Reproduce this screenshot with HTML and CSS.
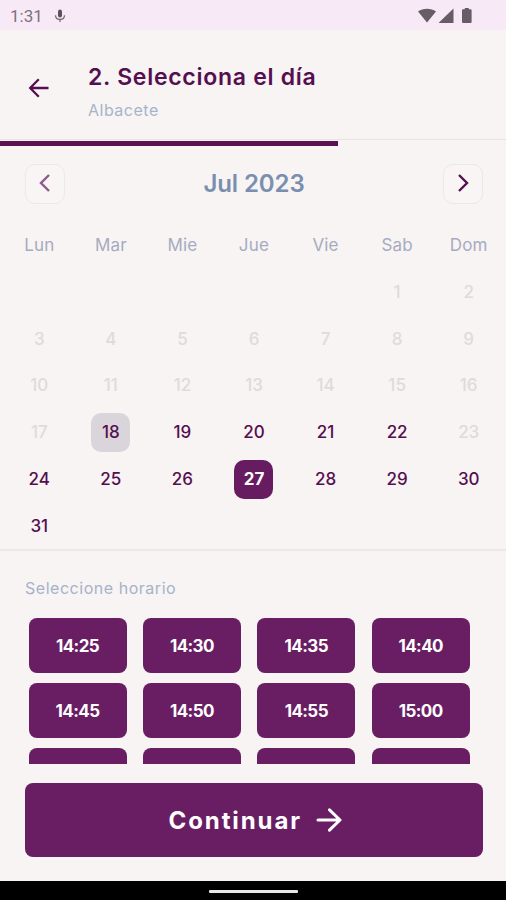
FILE: index.html
```html
<!DOCTYPE html>
<html lang="es">
<head>
<meta charset="utf-8">
<meta name="viewport" content="width=device-width, initial-scale=1">
<title>Selecciona el día</title>
<link rel="stylesheet" href="styles.css">
</head>
<body>
<div class="screen">
  <div class="status">
    <span class="clock">1:31</span>
    <svg class="mic" width="12" height="14" viewBox="0 0 12 14"><rect x="4" y="0.5" width="4" height="8" rx="2" fill="#5b5159"/><path d="M1.5 6.3c0 2.6 2 4.2 4.5 4.2s4.500-1.600 4.500-4.200M6 10.500V13" fill="none" stroke="#776d75" stroke-width="1.300"/></svg>
    <svg class="signals" width="56" height="18" viewBox="0 0 56 18"><path d="M0 4.500C5 .7 13 .7 18 4.500L9 15.500z"/><path d="M35.500 1.500v14.500H20.500z"/><path d="M44 3.200q0-1 1-1h1.800V1h4v1.200h1.800q1 0 1 1V15q0 1-1 1H45q-1 0-1-1z"/></svg>
  </div>
  <header class="header">
    <svg class="back" width="24" height="24" viewBox="0 0 24 24"><path d="M21.500 12H3M11.800 3.300L3.200 12l8.600 8.700"/></svg>
    <div class="heading">
      <h1>2. Selecciona el día</h1>
      <p>Albacete</p>
    </div>
  </header>
  <div class="progress"><div class="progress-bar"></div></div>
  <section class="calendar">
    <div class="month">
      <button class="nav prev" aria-label="Anterior"><svg width="14" height="20" viewBox="0 0 14 20"><path d="M11 2L3 10l8 8"/></svg></button>
      <h2>Jul 2023</h2>
      <button class="nav" aria-label="Siguiente"><svg width="14" height="20" viewBox="0 0 14 20"><path d="M3 2l8 8-8 8"/></svg></button>
    </div>
    <div class="days">
      <span class="wd">Lun</span><span class="wd">Mar</span><span class="wd">Mie</span><span class="wd">Jue</span><span class="wd">Vie</span><span class="wd">Sab</span><span class="wd">Dom</span>
      <span class="off first">1</span><span class="off">2</span>
      <span class="off">3</span><span class="off">4</span><span class="off">5</span><span class="off">6</span><span class="off">7</span><span class="off">8</span><span class="off">9</span>
      <span class="off">10</span><span class="off">11</span><span class="off">12</span><span class="off">13</span><span class="off">14</span><span class="off">15</span><span class="off">16</span>
      <span class="off">17</span><span class="today">18</span><span>19</span><span>20</span><span>21</span><span>22</span><span class="off">23</span>
      <span>24</span><span>25</span><span>26</span><span class="selected">27</span><span>28</span><span>29</span><span>30</span>
      <span>31</span>
    </div>
  </section>
  <section class="times">
    <h3>Seleccione horario</h3>
    <div class="slots">
      <button>14:25</button><button>14:30</button><button>14:35</button><button>14:40</button>
      <button>14:45</button><button>14:50</button><button>14:55</button><button>15:00</button>
      <button></button><button></button><button></button><button></button>
    </div>
  </section>
  <div class="footer">
    <button class="continue"><span>Continuar</span><svg width="26" height="26" viewBox="0 0 26 26"><path d="M2 13h22M13.500 2.800L24 13 13.500 23.200"/></svg></button>
  </div>
  <div class="system"><div class="handle"></div></div>
</div>
</body>
</html>
```
FILE: styles.css
```css
* { box-sizing: border-box; }
body, h1, h2, h3, p { margin: 0; }
body { font-family: Inter, "Liberation Sans", sans-serif; }
button { border: 0; padding: 0; font: inherit; }
svg { display: block; }

.screen {
  width: 506px;
  height: 900px;
  display: flex;
  flex-direction: column;
  overflow: hidden;
  background: #f7f4f3;
  color: #550f50;
}

.status {
  flex: none;
  height: 30px;
  display: flex;
  align-items: center;
  padding: 1px 32px 0 10px;
  background: #f8e9f7;
}
.clock {
  width: 44px;
  font: 400 17px/20px Roboto, sans-serif;
  color: #7c737b;
}
.signals { margin-left: auto; fill: #665d65; }

.header {
  flex: none;
  height: 110px;
  display: flex;
  padding: 33px 0 0 26px;
  border-bottom: 1px solid #e7e3e3;
}
.back { margin: 13px 0 0 1px; fill: none; stroke: #550f50; stroke-width: 2.3; }
.heading { padding-left: 37px; }
.heading h1 { font-size: 23px; line-height: 28px; font-weight: 600; letter-spacing: 0.72px; white-space: nowrap; }
.heading p { margin-top: 8px; font-size: 16px; line-height: 22px; letter-spacing: 0.5px; color: #a6b5cb; }

.progress { flex: none; height: 6px; padding-top: 1px; }
.progress-bar { width: 338px; height: 5px; background: #5a1054; }

.calendar {
  flex: none;
  height: 405px;
  padding-top: 18px;
  border-bottom: 2px solid #ece8e8;
}
.month {
  display: flex;
  justify-content: space-between;
  padding: 0 23px 0 25px;
}
.month h2 { font-size: 24px; line-height: 40px; font-weight: 600; letter-spacing: -0.1px; color: #7a8faf; }
.nav {
  width: 40px;
  height: 40px;
  display: flex;
  justify-content: center;
  padding-top: 8px;
  border: 1px solid #ece8e8;
  border-radius: 10px;
  background: #f8f5f4;
}
.nav svg { fill: none; stroke: #550f50; stroke-width: 2.4; }
.prev svg { stroke: #8e5a8b; }

.days {
  width: 501px;
  margin: 18.200px 0 0 3.500px;
  display: grid;
  grid-template-columns: repeat(7, 1fr);
  grid-auto-rows: 46.8px;
  align-items: center;
  justify-items: center;
}
.days span {
  width: 39px;
  height: 39px;
  border-radius: 10px;
  font-size: 17px;
  line-height: 39px;
  font-weight: 500;
  text-align: center;
}
.days .wd { font-weight: 400; letter-spacing: 0.2px; color: #a7abc0; display: flex; justify-content: center; }
.days .off { color: #dedbdc; }
.days .first { grid-column: 6; }
.days .today { background: #dad5db; }
.days .selected { background: #671c61; color: #fff; font-weight: 700; }

.times { flex: none; height: 213px; padding: 26px 36px 0 25px; overflow: hidden; }
.times h3 { font-size: 16px; line-height: 23px; font-weight: 400; letter-spacing: 0.53px; color: #a6b2ca; }
.slots {
  margin: 18px 0 0 3.500px;
  height: 145.500px;
  display: grid;
  grid-template-columns: repeat(4, 98px);
  grid-auto-rows: 55px;
  gap: 10px 16.400px;
  overflow: hidden;
}
.slots button {
  border-radius: 8px;
  background: #691e63;
  color: #fff;
  font-size: 17px;
  font-weight: 700;
  letter-spacing: -0.600px;
}

.footer { flex: none; height: 117px; padding: 19px 23.500px 0 25px; }
.continue {
  width: 100%;
  height: 74px;
  display: flex;
  align-items: center;
  justify-content: center;
  gap: 14px;
  padding-left: 3px;
  border-radius: 8px;
  background: #691e63;
  color: #fff;
  font-size: 24px;
  font-weight: 700;
  letter-spacing: 1.900px;
}
.continue svg { fill: none; stroke: #fff; stroke-width: 3; stroke-linecap: round; stroke-linejoin: round; }

.system { flex: none; height: 19px; padding-top: 9px; background: #000; }
.handle { width: 89px; height: 3px; margin-left: 209px; border-radius: 1px; background: #e8e8ea; }
```
